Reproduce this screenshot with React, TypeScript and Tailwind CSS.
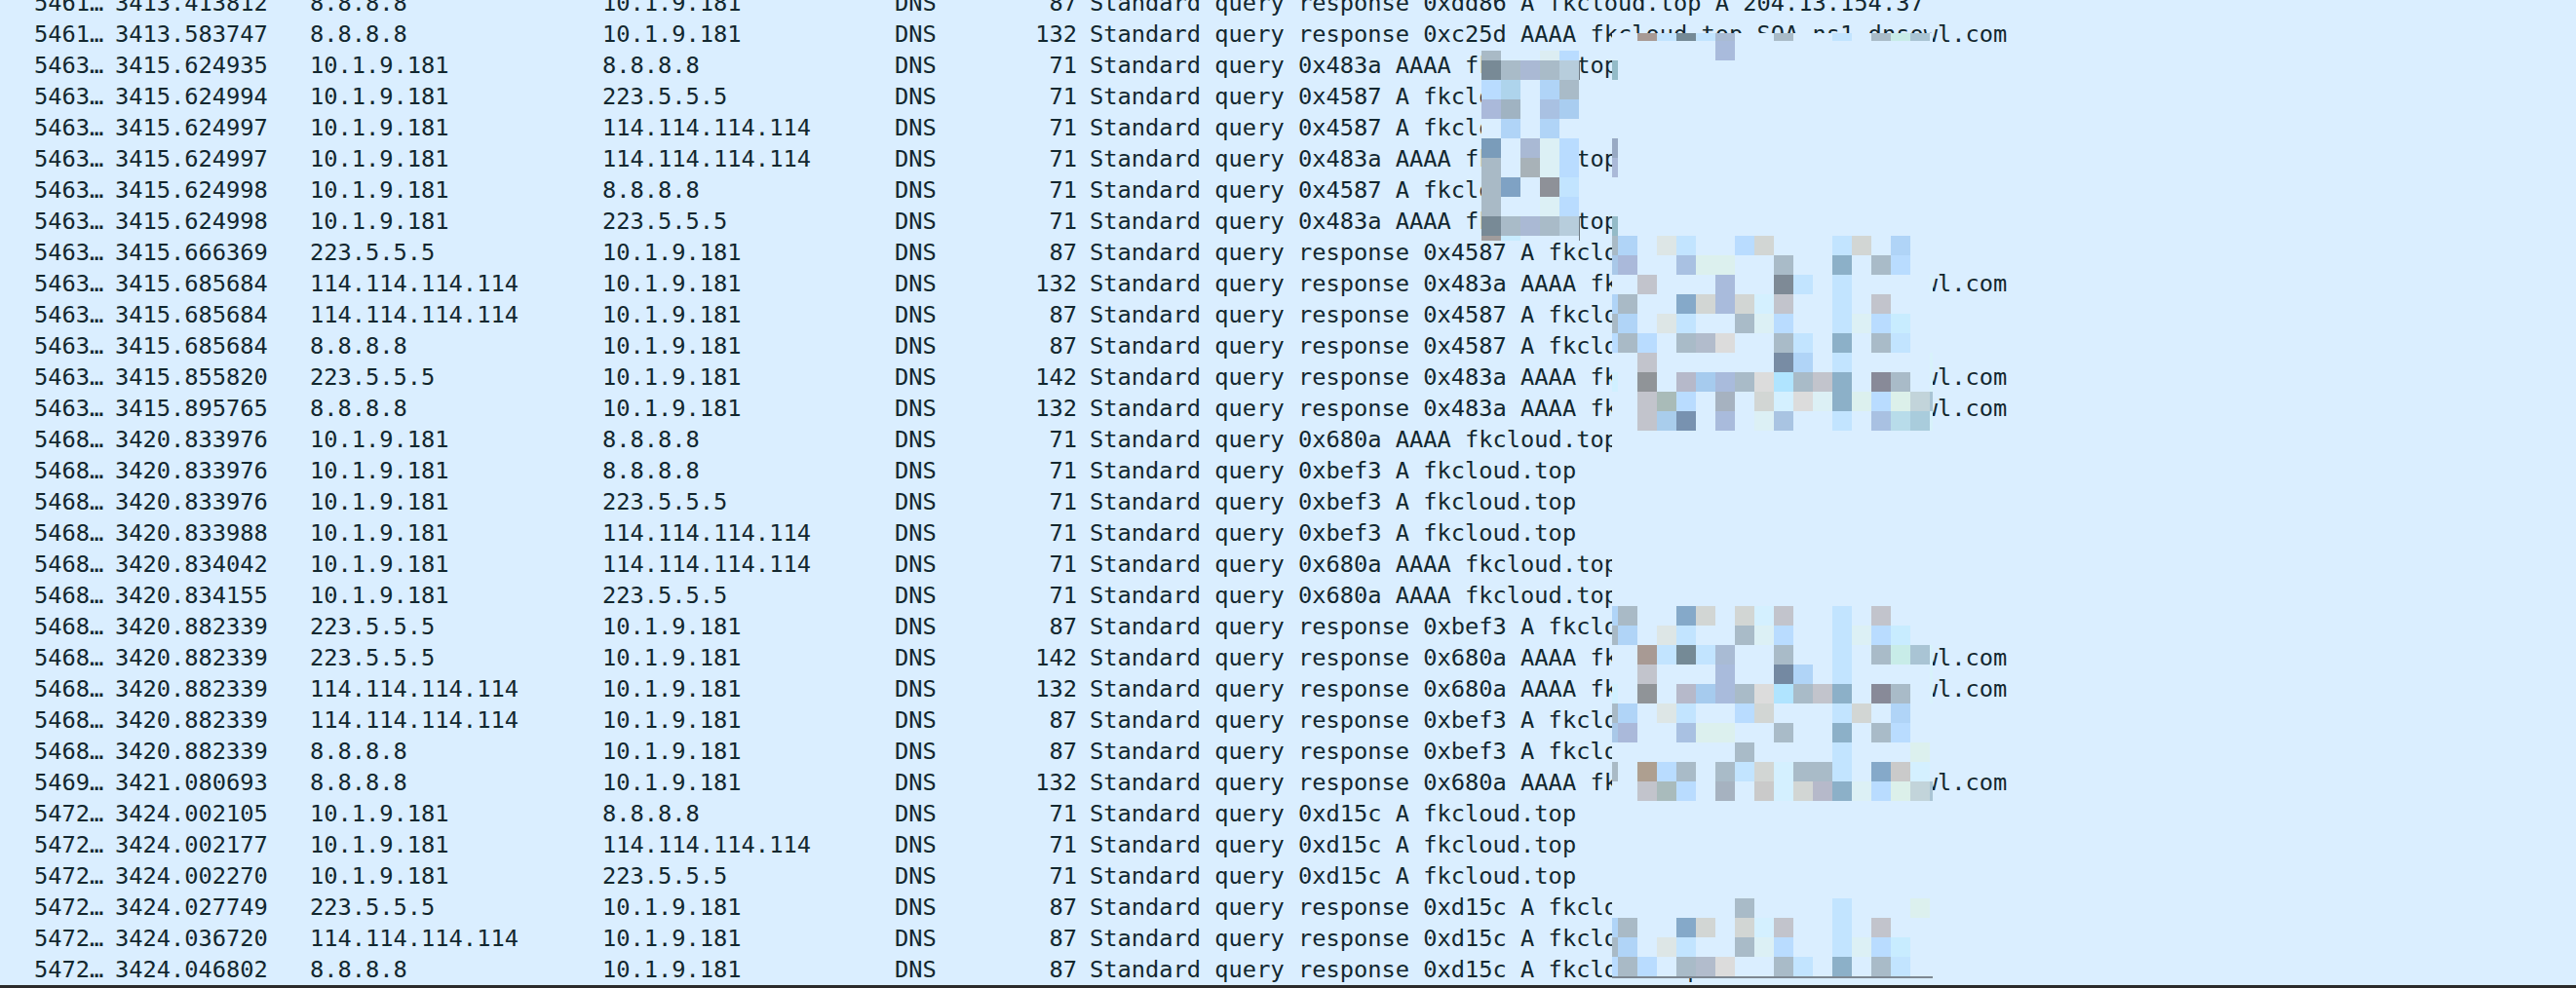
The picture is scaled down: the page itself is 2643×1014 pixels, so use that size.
const font = "font-['DejaVu_Sans_Mono','Liberation_Mono',monospace]";

const Q = "Standard query ";
const R = "Standard query response ";
const SOA = " AAAA fkcloud.top SOA ns1.dnsowl.com";
const AR = " A fkcloud.top A 204.13.154.37";
const LOCAL = "10.1.9.181";
const DNS114 = "114.114.114.114";

// no, time, source, destination, length, info
const rows: [string, string, string, string, number, string][] = [
  ["5461…", "3413.413812", "8.8.8.8", LOCAL, 87, R + "0xdd86" + AR],
  ["5461…", "3413.583747", "8.8.8.8", LOCAL, 132, R + "0xc25d" + SOA],
  ["5463…", "3415.624935", LOCAL, "8.8.8.8", 71, Q + "0x483a AAAA fkcloud.top"],
  ["5463…", "3415.624994", LOCAL, "223.5.5.5", 71, Q + "0x4587 A fkcloud.top"],
  ["5463…", "3415.624997", LOCAL, DNS114, 71, Q + "0x4587 A fkcloud.top"],
  ["5463…", "3415.624997", LOCAL, DNS114, 71, Q + "0x483a AAAA fkcloud.top"],
  ["5463…", "3415.624998", LOCAL, "8.8.8.8", 71, Q + "0x4587 A fkcloud.top"],
  ["5463…", "3415.624998", LOCAL, "223.5.5.5", 71, Q + "0x483a AAAA fkcloud.top"],
  ["5463…", "3415.666369", "223.5.5.5", LOCAL, 87, R + "0x4587" + AR],
  ["5463…", "3415.685684", DNS114, LOCAL, 132, R + "0x483a" + SOA],
  ["5463…", "3415.685684", DNS114, LOCAL, 87, R + "0x4587" + AR],
  ["5463…", "3415.685684", "8.8.8.8", LOCAL, 87, R + "0x4587" + AR],
  ["5463…", "3415.855820", "223.5.5.5", LOCAL, 142, R + "0x483a" + SOA],
  ["5463…", "3415.895765", "8.8.8.8", LOCAL, 132, R + "0x483a" + SOA],
  ["5468…", "3420.833976", LOCAL, "8.8.8.8", 71, Q + "0x680a AAAA fkcloud.top"],
  ["5468…", "3420.833976", LOCAL, "8.8.8.8", 71, Q + "0xbef3 A fkcloud.top"],
  ["5468…", "3420.833976", LOCAL, "223.5.5.5", 71, Q + "0xbef3 A fkcloud.top"],
  ["5468…", "3420.833988", LOCAL, DNS114, 71, Q + "0xbef3 A fkcloud.top"],
  ["5468…", "3420.834042", LOCAL, DNS114, 71, Q + "0x680a AAAA fkcloud.top"],
  ["5468…", "3420.834155", LOCAL, "223.5.5.5", 71, Q + "0x680a AAAA fkcloud.top"],
  ["5468…", "3420.882339", "223.5.5.5", LOCAL, 87, R + "0xbef3" + AR],
  ["5468…", "3420.882339", "223.5.5.5", LOCAL, 142, R + "0x680a" + SOA],
  ["5468…", "3420.882339", DNS114, LOCAL, 132, R + "0x680a" + SOA],
  ["5468…", "3420.882339", DNS114, LOCAL, 87, R + "0xbef3" + AR],
  ["5468…", "3420.882339", "8.8.8.8", LOCAL, 87, R + "0xbef3" + AR],
  ["5469…", "3421.080693", "8.8.8.8", LOCAL, 132, R + "0x680a" + SOA],
  ["5472…", "3424.002105", LOCAL, "8.8.8.8", 71, Q + "0xd15c A fkcloud.top"],
  ["5472…", "3424.002177", LOCAL, DNS114, 71, Q + "0xd15c A fkcloud.top"],
  ["5472…", "3424.002270", LOCAL, "223.5.5.5", 71, Q + "0xd15c A fkcloud.top"],
  ["5472…", "3424.027749", "223.5.5.5", LOCAL, 87, R + "0xd15c" + AR],
  ["5472…", "3424.036720", DNS114, LOCAL, 87, R + "0xd15c" + AR],
  ["5472…", "3424.046802", "8.8.8.8", LOCAL, 87, R + "0xd15c" + AR],
];

// mosaic cells: column -> colour. Column 0 sits at x=1660, each is 20px wide.
// -1 and 16 are the slivers cut off by the edges of the redaction.
type Cells = Record<number, string>;

const rowA: Cells = { [-1]: "#a9bac6", 0: "#b0d4f7", 2: "#dde6e6", 3: "#c2e4ff", 6: "#b9dcff", 7: "#d2d6d4", 11: "#c2e4ff", 12: "#d2d6d4", 14: "#b0d4f7" };
const rowB: Cells = { [-1]: "#a9c8e8", 0: "#aab9da", 3: "#a9c1e2", 4: "#dcf0ee", 5: "#dcf0ee", 8: "#a9bbc8", 11: "#8cb0c8", 13: "#a9bbc8", 14: "#b9dcff" };
const rowC: Cells = { [-1]: "#b0d4f7", 0: "#a9bac6", 3: "#85a9c9", 4: "#d2d6d4", 6: "#d2d6d4", 7: "#d4f0ff", 8: "#c2c4cc", 11: "#c2e4ff", 13: "#c2c4cc" };
const rowD: Cells = { [-1]: "#a9bac6", 0: "#b0d4f7", 2: "#dde6e6", 3: "#c2e4ff", 6: "#a9bbc8", 7: "#dcf0f5", 8: "#b9dcff", 11: "#c2e4ff", 12: "#dcf0f5", 13: "#b9dcff", 14: "#c8ecff" };
const rowE: Cells = { [-1]: "#b9dcff", 0: "#a9bac6", 1: "#b9dcff", 3: "#a9bbc8", 4: "#b2bccc", 5: "#dcdcdc", 8: "#a9bbc8", 9: "#c2e4ff", 11: "#8cb0c8", 13: "#a9bbc8", 14: "#c2e4ff" };
const rowF: Cells = { [-1]: "#d0f0ff", 1: "#909498", 3: "#b6b9ca", 4: "#a6cbee", 5: "#a9bbdc", 6: "#a9bbc8", 7: "#dcdcdc", 8: "#b0e4ff", 9: "#a9bbc8", 10: "#c2c4cc", 11: "#8cb0c8", 13: "#888a98", 14: "#a9bbc8", 16: "#d8f2fb" };
const rowG: Cells = { 6: "#a9bbc8", 11: "#c2e4ff", 15: "#dcf0ee" };
const rowH: Cells = { [-7]: "#788a96", [-6]: "#a9bbc8", [-5]: "#aab9d4", [-4]: "#a9bbc8", [-3]: "#b7cddc", [-1]: "#94bbc8" };

const mosaic: [number, number, Cells][] = [
  [34, 8, { 1: "#a89a94", 2: "#c2e4ff", 3: "#758a96", 4: "#c2e4ff", 5: "#a9bbd4", 8: "#a9bbc8", 11: "#c2e4ff", 13: "#a9bbc8", 14: "#c8ece8", 15: "#a9c4d4" }],
  [42, 20, { 5: "#a9bbdc" }],
  [52, 10, { [-7]: "#a9bac6", [-4]: "#dcedf2", [-3]: "#b9dcff" }],
  [62, 20, rowH],
  [82, 20, { [-7]: "#b9dcff", [-6]: "#aed4ec", [-4]: "#b0d4f7", [-3]: "#a9bbc8" }],
  [102, 20, { [-7]: "#aab9da", [-6]: "#a0b3c2", [-4]: "#a9c1e2", [-3]: "#a9cdf0" }],
  [122, 20, { [-6]: "#b0d4f7", [-4]: "#b0d4f7" }],
  [142, 20, { [-7]: "#7a9cba", [-5]: "#a9b9d4", [-4]: "#dcf0f5", [-3]: "#b9dcff", [-1]: "#98aac4" }],
  [162, 20, { [-7]: "#a9bac6", [-5]: "#a8b2b8", [-4]: "#dcf0f5", [-3]: "#b9dcff", [-1]: "#aab9d8" }],
  [182, 20, { [-7]: "#a9bac6", [-6]: "#7fa2c4", [-4]: "#8e9198", [-3]: "#c2e4ff" }],
  [202, 20, { [-7]: "#a9bac6", [-4]: "#dcf0f5", [-3]: "#b9dcff" }],
  [222, 20, rowH],
  [242, 5, { [-7]: "#a09c9c", [-6]: "#c8ecff" }],

  [242, 20, rowA],
  [262, 20, rowB],
  [282, 20, { 1: "#c2c4cc", 5: "#a9bbdc", 8: "#7e8a96", 9: "#c2e4ff", 11: "#c2e4ff", 16: "#d8f2fb" }],
  [302, 20, { ...rowC, 5: "#a9bbdc" }],
  [322, 20, rowD],
  [342, 20, rowE],
  [362, 20, { 1: "#c2c4cc", 8: "#788ca4", 9: "#b0d4f7", 11: "#c2e4ff", 16: "#d8f2fb" }],
  [382, 20, rowF],
  [402, 20, { 1: "#c2c4cc", 2: "#a9bbb8", 3: "#b9dcff", 5: "#a6b2c0", 7: "#d2d6d4", 8: "#d4f0ff", 9: "#dcdcdc", 10: "#dcf0f5", 11: "#8cb0c8", 12: "#dcf0ee", 13: "#b9dcff", 14: "#dcf0ea", 15: "#c2d4da", 16: "#a9c4d4" }],
  [422, 20, { 1: "#c2c4cc", 2: "#a9cdec", 3: "#7892b0", 5: "#a9bbdc", 7: "#dcf0f5", 8: "#a9c4e2", 11: "#c2e4ff", 13: "#a9c1e2", 14: "#b8dcea", 15: "#a9ccdc", 16: "#d8f2fb" }],

  [622, 20, rowC],
  [642, 20, rowD],
  [662, 20, { 1: "#a89a94", 2: "#c2e4ff", 3: "#758a96", 4: "#c2e4ff", 5: "#a9bbd4", 8: "#a9bbc8", 11: "#c2e4ff", 13: "#a9bbc8", 14: "#c8ece8", 15: "#a9c4d4", 16: "#d8f2fb" }],
  [682, 20, { 1: "#c2c4cc", 5: "#a9bbdc", 8: "#7489a2", 9: "#b0d4f7", 11: "#c2e4ff", 16: "#d8f2fb" }],
  [702, 20, rowF],
  [722, 20, rowA],
  [742, 20, rowB],
  [762, 20, rowG],
  [782, 20, { [-1]: "#a9bac6", 1: "#ae9f90", 2: "#b9dcff", 3: "#a9bbc8", 5: "#a9bbc8", 6: "#c2e4ff", 7: "#d2d6d4", 8: "#d4f0ff", 9: "#a9bbc8", 10: "#a9bbc8", 11: "#c2e4ff", 13: "#85a9c9", 14: "#cacaca", 15: "#d4f0ff" }],
  [802, 20, { 1: "#c2c4cc", 2: "#a9bbbc", 3: "#b9dcff", 5: "#a6b2c0", 7: "#cacaca", 8: "#d4f0ff", 9: "#d2d6d4", 10: "#b6b9ca", 11: "#8cb0c8", 12: "#dcf0f5", 13: "#b9dcff", 14: "#dcf0ea", 15: "#c2d4da", 16: "#a9c4d4" }],

  [922, 20, rowG],
  [942, 20, rowC],
  [962, 20, rowD],
  [982, 20, rowE],
];

function Redaction() {
  return (
    <svg className="absolute left-0 top-0" width={2643} height={1014} shapeRendering="crispEdges">
      <rect x={1520} y={52} width={100} height={195} fill="#daeeff" />
      <rect x={1654} y={34} width={329} height={970} fill="#daeeff" />
      {mosaic.flatMap(([y, h, cells]) =>
        Object.entries(cells).map(([key, color]) => {
          const col = Number(key);
          const x = col === -1 ? 1654 : 1660 + col * 20;
          const w = col === -1 ? 6 : col === 16 ? 3 : 20;
          return <rect key={`${y}-${h}-${col}`} x={x} y={y} width={w} height={h} fill={color} />;
        })
      )}
      <rect x={1620} y={62} width={1} height={20} fill="#6f7a84" />
      <rect x={1620} y={222} width={1} height={25} fill="#6f7a84" />
      <rect x={1654} y={1002} width={329} height={2} fill="#7d8791" />
    </svg>
  );
}

export default function App() {
  return (
    <div className="relative flex h-[1014px] w-[2643px] flex-col overflow-hidden bg-[#daeeff]">
      <div className={`-mt-[13px] flex-1 overflow-hidden text-[23.7px] leading-[32px] text-[#12272f] ${font}`}>
        {rows.map((r, i) => (
          <div key={i} className="flex h-8 whitespace-pre">
            <div className="w-[118px] shrink-0 pl-[35px]">{r[0]}</div>
            <div className="w-[200px] shrink-0">{r[1]}</div>
            <div className="w-[300px] shrink-0">{r[2]}</div>
            <div className="w-[300px] shrink-0">{r[3]}</div>
            <div className="w-[100px] shrink-0">DNS</div>
            <div className="w-[87px] shrink-0 text-right">{r[4]}</div>
            <div className="ml-[13px]">{r[5]}</div>
          </div>
        ))}
      </div>
      <div className="h-[3px] shrink-0 bg-[#2b2b2b]" />
      <Redaction />
    </div>
  );
}
